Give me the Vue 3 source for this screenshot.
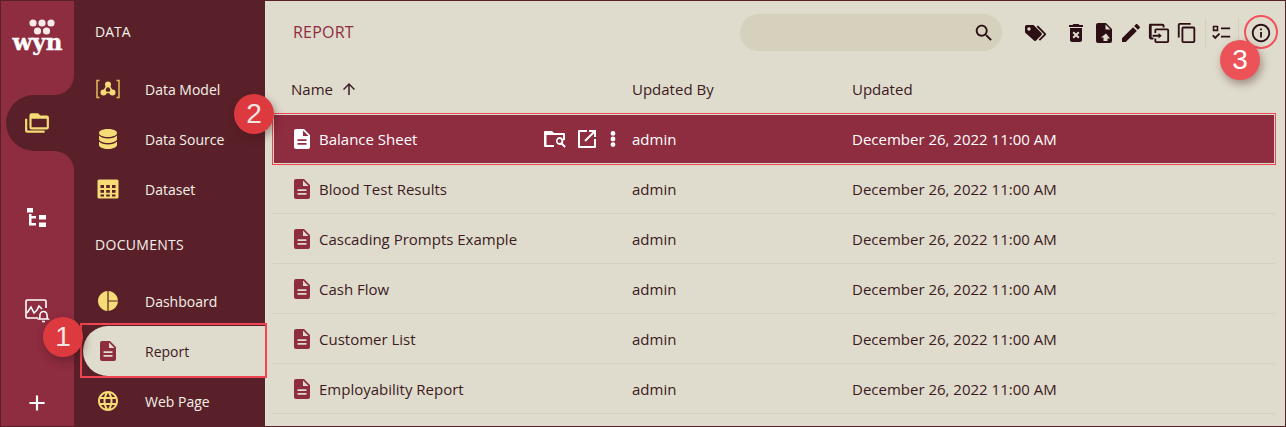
<script setup>
const P = {
  doc: 'M6 2h8l6 6v12a2 2 0 0 1-2 2H6a2 2 0 0 1-2-2V4a2 2 0 0 1 2-2zm7 1.500V9h5.500L13 3.500zM7.500 12.200v1.900h9v-1.900h-9zm0 3.700v1.900h9v-1.900h-9z',
  edit: 'M3 17.250V21h3.750L17.810 9.940l-3.750-3.750L3 17.250zM20.710 7.040c.39-.39.39-1.020 0-1.410l-2.340-2.340c-.39-.39-1.020-.39-1.410 0l-1.830 1.830 3.750 3.750 1.830-1.830z',
  del: 'M6 19c0 1.100.9 2 2 2h8c1.100 0 2-.9 2-2V7H6v12zm2.460-7.120l1.410-1.410L12 12.590l2.120-2.120 1.410 1.410L13.410 14l2.120 2.120-1.410 1.410L12 15.410l-2.120 2.120-1.410-1.410L10.590 14l-2.130-2.120zM15.500 4l-1-1h-5l-1 1H5v2h14V4z',
  search: 'M15.500 14h-.79l-.28-.27C15.410 12.590 16 11.110 16 9.500 16 5.910 13.090 3 9.500 3S3 5.910 3 9.500 5.910 16 9.500 16c1.610 0 3.090-.59 4.230-1.570l.27.28v.79l5 4.990L20.490 19l-4.990-5zm-6 0C7.010 14 5 11.990 5 9.500S7.010 5 9.500 5 14 7.010 14 9.500 11.990 14 9.500 14z',
  info: 'M11 7h2v2h-2zm0 4h2v6h-2zm1-9C6.480 2 2 6.480 2 12s4.480 10 10 10 10-4.480 10-10S17.520 2 12 2zm0 18c-4.410 0-8-3.590-8-8s3.590-8 8-8 8 3.590 8 8-3.590 8-8 8z',
  tag: 'M15 4.600l7.600 7.600a1.400 1.400 0 0 1 0 2L17 19.800l-1.300-1.300 5.400-5.300L13.600 5.800 15 4.600zM2 5.500A1.500 1.500 0 0 1 3.500 4h6.400c.4 0 .8.2 1.100.4l7.500 7.600a1.500 1.500 0 0 1 0 2.100l-5.400 5.400a1.500 1.500 0 0 1-2.100 0L2.500 12c-.3-.3-.5-.7-.5-1.100V5.500zM6 6.300a1.700 1.700 0 1 0 0 3.400 1.700 1.700 0 0 0 0-3.400z',
  fileimp: 'M6 2h8l6 6v12a2 2 0 0 1-2 2H6a2 2 0 0 1-2-2V4a2 2 0 0 1 2-2zm7.500 1.500V8.500h5L13.500 3.500zM14 12.500l-5 4h2.500V20h4v-2.500H18l-4-5z',
  copyin: 'M3 2h13a2 2 0 0 1 2 2v2h-2V4H4v13h2v2H3a2 2 0 0 1-2-2V4a2 2 0 0 1 1-2zm6 5h12a2 2 0 0 1 2 2v12a2 2 0 0 1-2 2H9a2 2 0 0 1-2-2v-3h2v3h12V9H9v3H7V9a2 2 0 0 1 2-2zm2.500 5l3.500 3-3.500 3v-2H5v-2h6.500v-2z',
  copy: 'M16 1H4a2 2 0 0 0-2 2v14h2V3h12V1zm3 4H8a2 2 0 0 0-2 2v14a2 2 0 0 0 2 2h11a2 2 0 0 0 2-2V7a2 2 0 0 0-2-2zm0 16H8V7h11v14z',
  checks: 'M3 4h6v6H3V4zm1.700 1.700v2.600h2.600V5.700H4.700zM12 6h10v2H12V6zm0 9h10v2H12v-2zM2.300 15.300l1.400-1.400 2 2 4-4 1.400 1.400L5.700 18.700l-3.400-3.400z',
  open: 'M4 3h8v2H5v14h14v-7h2v8a1 1 0 0 1-1 1H4a1 1 0 0 1-1-1V4a1 1 0 0 1 1-1zm10 0h7v7h-2V6.400l-8.300 8.300-1.400-1.400L17.600 5H14V3z',
  folderq: 'M2 4h7l2 2h10a1 1 0 0 1 1 1v6h-2V8H3.500v10H11v2H2a1 1 0 0 1-1-1V5a1 1 0 0 1 1-1zm14.500 6a4 4 0 0 1 3.300 6.300l3 3-1.300 1.400-3.100-3A4 4 0 1 1 16.500 10zm0 2a2 2 0 1 0 0 4 2 2 0 0 0 0-4z',
  dots: 'M12 8.800a2.400 2.400 0 1 0 0-4.800 2.400 2.400 0 0 0 0 4.800zm0 .8a2.400 2.400 0 1 0 0 4.800 2.400 2.400 0 0 0 0-4.800zm0 5.600a2.400 2.400 0 1 0 0 4.800 2.400 2.400 0 0 0 0-4.800z',
  db: 'M12 2c5 0 9 1.600 9 4s-4 4-9 4-9-1.600-9-4 4-4 9-4zM3 8.500C4.700 10.600 8.200 11.500 12 11.500s7.300-.9 9-3V12c0 2.300-4 4-9 4s-9-1.700-9-4V8.500zm0 6c1.700 2.100 5.200 3 9 3s7.300-.9 9-3V18c0 2.300-4 4-9 4s-9-1.700-9-4v-3.500z',
  grid: 'M3 2.500h18a1.500 1.500 0 0 1 1.500 1.500v16a1.500 1.500 0 0 1-1.500 1.500H3A1.500 1.500 0 0 1 1.500 20V4A1.500 1.500 0 0 1 3 2.500zM4.500 8v3h3.500V8H4.500zm5.700 0v3h3.600V8h-3.600zM16 8v3h3.500V8H16zM4.500 13v2.800h3.500V13H4.500zm5.700 0v2.800h3.600V13h-3.600zM16 13v2.800h3.500V13H16zM4.500 17.500v2h3.500v-2H4.500zm5.700 0v2h3.600v-2h-3.600zm5.800 0v2h3.500v-2H16z',
  pie: 'M11.400 2v20C6.200 21.500 2 17.200 2 12S6.200 2.500 11.400 2zm1.200 0c4.900.3 9 4.300 9.400 9.400h-9.400V2zm0 10.600H22c-.4 5-4.500 9.100-9.400 9.400v-9.400z',
  globe: 'M11.990 2C6.470 2 2 6.480 2 12s4.470 10 9.990 10C17.520 22 22 17.520 22 12S17.520 2 11.990 2zm6.930 6h-2.950c-.32-1.250-.78-2.450-1.380-3.560 1.840.63 3.370 1.910 4.330 3.560zM12 4.040c.83 1.200 1.480 2.530 1.910 3.960h-3.820c.43-1.430 1.080-2.760 1.910-3.960zM4.260 14C4.100 13.360 4 12.690 4 12s.1-1.360.26-2h3.380c-.08.66-.14 1.320-.14 2 0 .68.06 1.340.14 2H4.260zm.82 2h2.950c.32 1.250.78 2.450 1.380 3.560-1.840-.63-3.370-1.900-4.330-3.560zm2.950-8H5.080c.96-1.660 2.490-2.930 4.330-3.560C8.810 5.550 8.350 6.750 8.030 8zM12 19.960c-.83-1.200-1.480-2.530-1.910-3.960h3.820c-.43 1.430-1.080 2.760-1.910 3.960zM14.340 14H9.660c-.09-.66-.16-1.320-.16-2 0-.68.07-1.350.16-2h4.680c.09.65.16 1.320.16 2 0 .68-.07 1.340-.16 2zm.25 5.560c.6-1.110 1.060-2.310 1.380-3.560h2.950c-.96 1.650-2.490 2.930-4.330 3.560zM16.360 14c.08-.66.14-1.320.14-2 0-.68-.06-1.340-.14-2h3.380c.16.64.26 1.310.26 2s-.1 1.360-.26 2h-3.380z',
  folders: 'M7 3h6l2 2h6a2 2 0 0 1 2 2v9a2 2 0 0 1-2 2H7a2 2 0 0 1-2-2V5a2 2 0 0 1 2-2zm0 5v8h14V8H7zM1 8h2v11h16v2H3a2 2 0 0 1-2-2V8z',
  plus: 'M19 13h-6v6h-2v-6H5v-2h6V5h2v6h6v2z',
  arrow: 'M4 12l1.410 1.410L11 7.830V20h2V7.830l5.580 5.590L20 12l-8-8-8 8z'
}
const dataItems = [
  { label: 'Data Model', icon: 'model', frame: true },
  { label: 'Data Source', icon: 'db' },
  { label: 'Dataset', icon: 'grid' }
]
const docItems = [
  { label: 'Dashboard', icon: 'pie' },
  { label: 'Report', icon: 'doc', active: true },
  { label: 'Web Page', icon: 'globe' }
]
const rows = ['Balance Sheet', 'Blood Test Results', 'Cascading Prompts Example', 'Cash Flow', 'Customer List', 'Employability Report']
</script>

<template>
  <div class="page">
    <aside class="rail">
      <div class="seg top">
        <svg class="logo-dots" width="28" height="20" viewBox="0 0 28 20">
          <circle cx="5" cy="5" r="3.600" /><circle cx="14" cy="5" r="3.600" /><circle cx="23" cy="5" r="3.600" />
          <circle cx="9.500" cy="13" r="3.600" /><circle cx="18.500" cy="13" r="3.600" />
        </svg>
        <span class="logo-text">wyn</span>
      </div>
      <div class="tabwrap">
        <div class="tab">
          <svg width="26" height="26" viewBox="0 0 24 24"><path :d="P.folders" fill="#f5dc76" /></svg>
        </div>
      </div>
      <div class="seg bottom">
        <svg class="r-tree" width="20" height="21" viewBox="0 0 20 21" fill="#fff">
          <rect x="0" y="0" width="6" height="4.500" />
          <path d="M2 6h2.500v2h4.500v2.500H4.500v4.500h4.500v2.500H2z" />
          <rect x="12" y="7" width="7" height="4.500" />
          <rect x="12" y="14.500" width="7" height="4.500" />
        </svg>
        <svg class="r-mon" width="28" height="28" viewBox="0 0 28 28" fill="none" stroke="#fff" stroke-width="1.600">
          <path d="M15 21H4a1 1 0 0 1-1-1V4a1 1 0 0 1 1-1h18a1 1 0 0 1 1 1v7" />
          <path d="M4 16l4-6 3 6 3-3 2-4 3 3" />
          <path d="M16 22c1-1 1-2 1-4a3.500 3.500 0 0 1 7 0c0 2 0 3 1 4z" />
          <path d="M19 24.500h3" />
        </svg>
        <svg class="r-plus" width="26" height="26" viewBox="0 0 24 24"><path :d="P.plus" fill="#fff" /></svg>
      </div>
    </aside>

    <nav class="panel">
      <div class="group">DATA</div>
      <div v-for="it in dataItems" :key="it.label" class="item">
        <span class="ico">
          <svg v-if="it.frame" width="24" height="20" viewBox="0 0 24 20" class="frame">
            <path d="M3.500 1.500H1v17h2.500M20.500 1.500H23v17h-2.500" fill="none" stroke="#e0bd58" stroke-width="1.500" />
            <path d="M12 5l-5 8.500h10z" fill="none" stroke="#f5dc76" stroke-width="1.500" />
            <circle cx="12" cy="5.500" r="3" fill="#f5dc76" />
            <circle cx="7.500" cy="13.500" r="3" fill="#f5dc76" />
            <circle cx="16.500" cy="13.500" r="3" fill="#f5dc76" />
          </svg>
          <svg v-else width="24" height="24" viewBox="0 0 24 24"><path :d="P[it.icon]" fill="#f5dc76" /></svg>
        </span>
        <span>{{ it.label }}</span>
      </div>
      <div class="group docs">DOCUMENTS</div>
      <div v-for="it in docItems" :key="it.label" class="item" :class="{ active: it.active }">
        <span class="ico">
          <svg width="24" height="24" viewBox="0 0 24 24"><path :d="P[it.icon]" :fill="it.active ? '#8e2c40' : '#f5dc76'" /></svg>
        </span>
        <span>{{ it.label }}</span>
      </div>
    </nav>

    <main class="main">
      <header class="head">
        <h1>REPORT</h1>
        <div class="search">
          <svg width="22" height="22" viewBox="0 0 24 24"><path :d="P.search" fill="#2b0f14" /></svg>
        </div>
        <div class="tools">
          <svg class="t-tag" width="24" height="24" viewBox="0 0 24 24"><path :d="P.tag" /></svg>
          <svg class="t-del" width="24" height="24" viewBox="0 0 24 24"><path :d="P.del" /></svg>
          <svg class="t-file" width="24" height="24" viewBox="0 0 24 24"><path :d="P.fileimp" /></svg>
          <svg class="t-edit" width="24" height="24" viewBox="0 0 24 24"><path :d="P.edit" /></svg>
          <svg class="t-in" width="22" height="22" viewBox="0 0 24 24"><path :d="P.copyin" /></svg>
          <svg class="t-copy" width="22" height="22" viewBox="0 0 24 24"><path :d="P.copy" /></svg>
          <i class="sep s1" />
          <svg class="t-chk" width="22" height="22" viewBox="0 0 24 24"><path :d="P.checks" /></svg>
          <i class="sep s2" />
          <svg class="t-info" width="22" height="22" viewBox="0 0 24 24"><path :d="P.info" /></svg>
        </div>
      </header>

      <div class="thead">
        <div class="c-name">Name <svg width="18" height="18" viewBox="0 0 24 24"><path :d="P.arrow" fill="#3b1a22" /></svg></div>
        <div class="c-by">Updated By</div>
        <div>Updated</div>
      </div>

      <div v-for="(r, i) in rows" :key="r" class="row" :class="{ sel: i === 0 }">
        <div class="c-name">
          <svg class="doc" width="24" height="24" viewBox="0 0 24 24"><path :d="P.doc" /></svg>
          <span>{{ r }}</span>
          <span v-if="i === 0" class="acts">
            <svg width="24" height="24" viewBox="0 0 24 24"><path :d="P.folderq" fill="#fff" /></svg>
            <svg class="a-open" width="24" height="24" viewBox="0 0 24 24"><path :d="P.open" fill="#fff" /></svg>
            <svg class="a-dots" width="24" height="24" viewBox="0 0 24 24"><path :d="P.dots" fill="#fff" /></svg>
          </span>
        </div>
        <div class="c-by">admin</div>
        <div>December 26, 2022 11:00 AM</div>
      </div>
    </main>

    <div class="callout c1">1</div>
    <div class="callout c2">2</div>
    <div class="callout c3">3</div>
    <div class="ring" />
  </div>
</template>

<style>
html, body { margin: 0; background: #e0dccd; }
</style>

<style scoped>
.page {
  position: relative;
  box-sizing: border-box;
  width: 1286px;
  height: 427px;
  display: flex;
  overflow: hidden;
  border: 1px solid #5a2029;
  font-family: "Open Sans", sans-serif;
  font-size: 15px;
  color: #3b1a22;
  background: #e0dccd;
}
.rail {
  width: 73px;
  flex: none;
  display: flex;
  flex-direction: column;
  background: #5a2029;
}
.seg { background: #8e2c40; display: flex; flex-direction: column; align-items: center; }
.top { height: 94px; border-bottom-right-radius: 20px; }
.logo-dots { margin-top: 17px; margin-left: 8px; }
.logo-dots circle { fill: #f6e9ea; }
.logo-text {
  margin-top: -8px;
  font-family: "DejaVu Serif", serif;
  font-weight: 700;
  font-size: 23px;
  line-height: 24px;
  color: #fff;
  -webkit-text-stroke: .4px #fff;
}
.tabwrap { height: 56px; background: #8e2c40; }
.tab {
  margin-left: 5px;
  height: 56px;
  background: #5a2029;
  border-radius: 28px 0 0 28px;
  display: flex;
  align-items: center;
  padding-left: 18px;
  box-sizing: border-box;
}
.bottom { flex: 1; border-top-right-radius: 20px; }
.r-tree { margin-top: 57px; margin-right: 1px; }
.r-mon { margin-top: 68px; margin-right: 1px; }
.r-plus { margin-top: 65px; margin-right: 1px; }
.panel {
  position: relative;
  z-index: 1;
  width: 191px;
  flex: none;
  background: #5a2029;
  color: #f4f0ea;
  font-size: 14px;
  padding-top: 21px;
  box-sizing: border-box;
}
.group { height: 20px; line-height: 20px; padding-left: 21px; margin-bottom: 22px; }
.docs { margin-top: 21px; margin-bottom: 21px; letter-spacing: .3px; }
.item {
  height: 50px;
  display: flex;
  align-items: center;
  padding-left: 21px;
  box-sizing: border-box;
}
.ico { width: 50px; display: flex; align-items: center; }
.item .ico svg { margin-left: 1px; }
.active {
  position: relative;
  margin-left: 9px;
  padding-left: 12px;
  color: #3b1a22;
  background: #e0dccd;
  border-radius: 25px 0 0 25px;
}
.active::after {
  content: "";
  position: absolute;
  inset: -3px -2px -2px -3px;
  border: 2px solid #ef4550;
  pointer-events: none;
  box-sizing: border-box;
}
.main { flex: 1; min-width: 0; }
.head { height: 63px; display: flex; align-items: center; }
h1 {
  flex: none;
  margin: 0 0 2px 28px;
  width: 447px;
  font-size: 16px;
  letter-spacing: .2px;
  font-weight: 400;
  color: #8e2c40;
}
.search {
  flex: none;
  width: 262px;
  height: 37px;
  border-radius: 19px;
  background: #d5d1bd;
  display: flex;
  justify-content: flex-end;
  align-items: center;
  padding-right: 7px;
  box-sizing: border-box;
}
.tools {
  flex: none;
  margin-left: 21px;
  display: flex;
  align-items: center;
  fill: #2b0f14;
}
.t-del { margin-left: 17px; }
.t-file { margin-left: 4px; }
.t-edit { margin-left: 3px; }
.t-in { margin-left: 5px; }
.t-copy { margin-left: 6px; }
.sep { width: 1px; height: 30px; background: #d3cfbd; }
.s1 { margin: 0 4px 0 7px; }
.s2 { margin: 0 11px 0 6px; }
.thead, .row {
  display: grid;
  grid-template-columns: 341px 220px 1fr;
  align-items: center;
  margin: 0 10px 0 8px;
  padding-left: 18px;
}
.thead { height: 50px; }
.row {
  position: relative;
  height: 50px;
  box-sizing: border-box;
  border-bottom: 1px solid #d5d1c1;
}
.row .c-name { position: relative; display: flex; align-items: center; }
.thead .c-name { display: flex; align-items: center; gap: 7px; }
.doc { margin: 0 5px 0 -1px; fill: #8e2c40; flex: none; }
.sel {
  background: #8e2c40;
  color: #fff;
  border-bottom: 0;
  outline: 1px solid #ef4550;
  box-shadow: inset 0 0 0 1px #e0dccd;
}
.sel .doc { fill: #fff; }
.acts {
  position: absolute;
  left: 252px;
  display: flex;
  align-items: center;
}
.a-open { margin-left: 8px; }
.a-dots { margin-left: 2px; }
.callout {
  position: absolute;
  z-index: 2;
  width: 40px;
  height: 40px;
  border-radius: 50%;
  background: #dd3a40;
  color: #f4e6e2;
  font-family: "Liberation Sans", sans-serif;
  font-size: 28px;
  line-height: 40px;
  text-align: center;
  box-shadow: 2px 4px 8px rgba(60, 20, 20, .4);
}
.c1 { left: 42px; top: 316px; }
.c2 { left: 233px; top: 93px; }
.c3 { left: 1219px; top: 39px; background: #ec5358; color: #fff; }
.ring {
  position: absolute;
  z-index: 1;
  left: 1243px;
  top: 14px;
  width: 34px;
  height: 34px;
  box-sizing: border-box;
  border: 2px solid #f4505a;
  border-radius: 50%;
}
</style>
